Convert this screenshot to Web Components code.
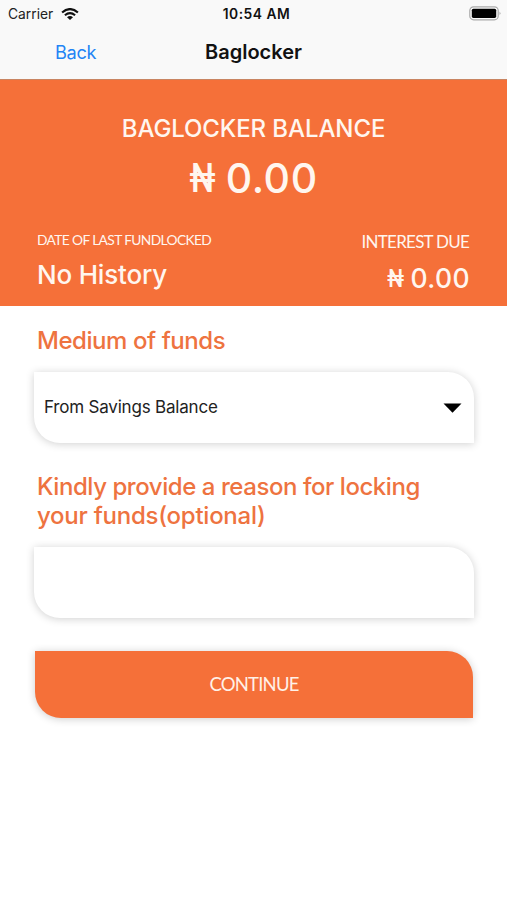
<!DOCTYPE html>
<html lang="en">
<head>
<meta charset="utf-8">
<title>Baglocker</title>
<style>
html,body{margin:0;background:#fff}
body{font-family:Inter,"Liberation Sans",sans-serif;width:507px;height:900px;overflow:hidden}
</style>
</head>
<body>
<lock-screen></lock-screen>
<script>
const define=(name,html)=>customElements.define(name,class extends HTMLElement{
  constructor(){super();this.attachShadow({mode:'open'}).innerHTML=html;}
});

define('status-bar',`<style>
:host{display:grid;grid-template-columns:1fr auto 1fr;align-items:center;height:27px;padding:0 6px 0 8px;font-size:13.8px;color:#222}
.left{display:flex;align-items:center;gap:8px}
.time{font-weight:600;color:#111;letter-spacing:.5px;padding-left:4px}
.battery{justify-self:end}
svg{display:block}
</style>
<div class="left"><span>Carrier</span>
<svg width="18" height="12" viewBox="0 0 18 12" fill="none" stroke="#111"><path d="M1.1 4.5Q9-2.3 16.9 4.5" stroke-width="2.2"/><path d="M3.9 7.3Q9 3 14.1 7.3" stroke-width="2.1"/><path d="M6 9.2Q9 6.7 12 9.2L9 12Z" fill="#111" stroke="none"/></svg></div>
<span class="time">10:54 AM</span>
<svg class="battery" width="32" height="15" viewBox="0 0 32 15"><rect x=".8" y=".8" width="28.4" height="13" rx="3.8" fill="#fafafa" stroke="#aaa" stroke-width="1.2"/><rect x="2.8" y="2.7" width="24.4" height="9.2" rx="1.6"/><path d="M30.6 5.5q1.5 1.8 0 3.6z" fill="#999"/></svg>`);

define('nav-bar',`<style>
:host{display:grid;grid-template-columns:1fr auto 1fr;align-items:center;height:53px;padding-bottom:2px;font-size:18.2px;border-bottom:1px solid #c98562;box-sizing:border-box}
.back{padding-left:55px;color:#2284f5;letter-spacing:-.35px}
.title{font-size:20px;font-weight:600;color:#111}
</style><span class="back"><slot name="back"></slot></span><span class="title"><slot></slot></span>`);

define('naira-amount',`<style>
:host{display:inline-flex;gap:.25em;letter-spacing:.015em}
.sign{display:flex;justify-content:center;width:.64em;font-family:Roboto,sans-serif;letter-spacing:0}
.sign span{transform:scaleX(.79)}
</style><span class="sign"><span>₦</span></span><span><slot></slot></span>`);

define('balance-panel',`<style>
:host{display:block;height:226px;box-sizing:border-box;padding:32px 37px 0 37px;background:#f57039;color:#fff6ef}
.head{text-align:center;font-size:24px;line-height:34px;font-weight:500;letter-spacing:-.1px}
.total{display:flex;justify-content:center;font-size:41px;line-height:64px;font-weight:500}
.row{display:flex;justify-content:space-between;padding-top:20px}
.cap{font-family:Lato,sans-serif}
.l .cap{font-size:13.8px;line-height:20px;letter-spacing:-.64px}
.l .val{font-size:26px;line-height:36px;padding-top:7px;font-weight:500;letter-spacing:-.2px}
.r{text-align:right}
.r .cap{font-size:17px;line-height:24px;letter-spacing:-.75px;padding-right:1px}
.r .val{font-size:26.5px;line-height:36px;padding-top:5px;font-weight:500}
</style>
<div class="head">BAGLOCKER BALANCE</div>
<div class="total"><naira-amount>0.00</naira-amount></div>
<div class="row"><div class="l"><div class="cap">DATE OF LAST FUNDLOCKED</div><div class="val">No History</div></div>
<div class="r"><div class="cap">INTEREST DUE</div><div class="val"><naira-amount>0.00</naira-amount></div></div></div>`);

define('form-field',`<style>
:host{display:block}
.label{padding-left:3px;font-size:24px;line-height:29px;font-weight:500;letter-spacing:-.44px;color:#ee7340}
.box{display:flex;align-items:center;justify-content:space-between;height:71px;box-sizing:border-box;margin-top:17px;padding:0 12px 2px 10px;border-radius:0 26px 0 26px;background:#fff;box-shadow:0 1px 8px rgba(0,0,0,.19);font-size:17px;letter-spacing:-.2px;color:#222}
</style><div class="label"><slot name="label"></slot></div><div class="box"><slot></slot></div>`);

define('drop-arrow',`<style>:host{display:block;padding-top:2px}svg{display:block}</style><svg width="19" height="10" viewBox="0 0 19 10"><path d="M.5.5h18L9.5 9.7z"/></svg>`);

define('action-button',`<style>
:host{display:flex;align-items:center;justify-content:center;height:67px;box-sizing:border-box;padding-bottom:2px;border-radius:0 26px 0 26px;background:#f57039;color:#fff1e8;font:18.5px Lato,sans-serif;letter-spacing:-.8px;box-shadow:0 1px 8px rgba(0,0,0,.2)}
</style><slot></slot>`);

define('lock-screen',`<style>
:host{display:block}
header{background:#f9f9f9}
main{display:flex;flex-direction:column;padding:20px 33px 0 34px}
.second{margin-top:29px}
.tail{letter-spacing:-.25px}
action-button{margin:33px 1px 0}
</style>
<header><status-bar></status-bar><nav-bar><span slot="back">Back</span>Baglocker</nav-bar></header>
<balance-panel></balance-panel>
<main>
<form-field><span slot="label">Medium of funds</span><span>From Savings Balance</span><drop-arrow></drop-arrow></form-field>
<form-field class="second"><span slot="label">Kindly provide a reason for locking<br><span class="tail">your funds(optional)</span></span></form-field>
<action-button>CONTINUE</action-button>
</main>`);
</script>
</body>
</html>
